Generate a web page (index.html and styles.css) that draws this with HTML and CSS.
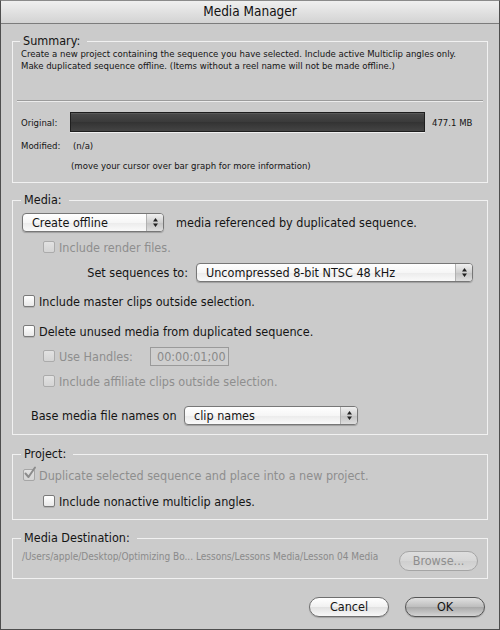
FILE: index.html
```html
<!DOCTYPE html>
<html>
<head>
<meta charset="utf-8">
<link rel="stylesheet" href="styles.css">
</head>
<body>
<div class="window">
  <div class="titlebar">Media Manager</div>
  <div class="content">
    <fieldset class="group summary">
      <legend>Summary:</legend>
      <p class="desc">Create a new project containing the sequence you have selected. Include active Multiclip angles only.<br>Make duplicated sequence offline. (Items without a reel name will not be made offline.)</p>
      <div class="sep"></div>
      <div class="stat-row original">
        <span class="stat-label">Original:</span>
        <div class="bar"></div>
        <span class="bar-value">477.1 MB</span>
      </div>
      <div class="stat-row modified">
        <span class="stat-label">Modified:</span>
        <span class="stat-value">(n/a)</span>
      </div>
      <p class="hint">(move your cursor over bar graph for more information)</p>
    </fieldset>

    <fieldset class="group media">
      <legend>Media:</legend>
      <div class="row r1">
        <div class="popup popup-offline">
          <span class="popup-label">Create offline</span>
          <span class="popup-arrows"><svg width="5" height="9" viewBox="0 0 5 9"><path d="M2.5 0 L5 3.5 H0 Z M0 5.5 H5 L2.5 9 Z" fill="#222"/></svg></span>
        </div>
        <span class="after-popup">media referenced by duplicated sequence.</span>
      </div>
      <div class="row r2 indent">
        <span class="check disabled"></span><span class="label disabled-text">Include render files.</span>
      </div>
      <div class="row r3">
        <span class="seq-label">Set sequences to:</span>
        <div class="popup popup-seq">
          <span class="popup-label">Uncompressed 8-bit NTSC 48 kHz</span>
          <span class="popup-arrows"><svg width="5" height="9" viewBox="0 0 5 9"><path d="M2.5 0 L5 3.5 H0 Z M0 5.5 H5 L2.5 9 Z" fill="#222"/></svg></span>
        </div>
      </div>
      <div class="row r4">
        <span class="check"></span><span class="label">Include master clips outside selection.</span>
      </div>
      <div class="row r5">
        <span class="check"></span><span class="label">Delete unused media from duplicated sequence.</span>
      </div>
      <div class="row r6 indent">
        <span class="check disabled"></span><span class="label disabled-text handles-label">Use Handles:</span>
        <span class="textfield">00:00:01;00</span>
      </div>
      <div class="row r7 indent">
        <span class="check disabled"></span><span class="label disabled-text">Include affiliate clips outside selection.</span>
      </div>
      <div class="row r8">
        <span class="base-label">Base media file names on</span>
        <div class="popup popup-base">
          <span class="popup-label">clip names</span>
          <span class="popup-arrows"><svg width="5" height="9" viewBox="0 0 5 9"><path d="M2.5 0 L5 3.5 H0 Z M0 5.5 H5 L2.5 9 Z" fill="#222"/></svg></span>
        </div>
      </div>
    </fieldset>

    <fieldset class="group project">
      <legend>Project:</legend>
      <div class="row p1">
        <span class="check disabled checked"><svg class="checkmark" width="14" height="14" viewBox="0 0 14 14"><path d="M2.5 7.5 L5.5 11 L12 1.5" stroke="#8c8c8c" stroke-width="2" fill="none" stroke-linecap="round" stroke-linejoin="round"/></svg></span><span class="label disabled-text">Duplicate selected sequence and place into a new project.</span>
      </div>
      <div class="row p2 indent">
        <span class="check"></span><span class="label">Include nonactive multiclip angles.</span>
      </div>
    </fieldset>

    <fieldset class="group destination">
      <legend>Media Destination:</legend>
      <div class="dest-row">
        <span class="path">/Users/apple/Desktop/Optimizing Bo... Lessons/Lessons Media/Lesson 04 Media</span>
        <span class="btn btn-disabled">Browse...</span>
      </div>
    </fieldset>

    <div class="buttons">
      <span class="btn">Cancel</span>
      <span class="btn btn-default">OK</span>
    </div>
  </div>
</div>
</body>
</html>
```

FILE: styles.css
```css
* { box-sizing: border-box; }
html, body { margin: 0; padding: 0; }
body {
  width: 500px;
  height: 630px;
  font-family: "DejaVu Sans Condensed", "DejaVu Sans", sans-serif;
  font-size: 12.5px;
  color: #141414;
  background: #cbcbcb;
}
.window {
  width: 500px;
  height: 630px;
  border: 1px solid #4e4e4e;
  border-top-color: #8a8a8a;
  background: #cbcbcb;
  display: flex;
  flex-direction: column;
  overflow: hidden;
}
.titlebar {
  flex: none;
  height: 23px;
  border-bottom: 1px solid #7c7c7c;
  background: linear-gradient(#efefef, #d3d3d3);
  text-align: center;
  font-size: 13.5px;
  line-height: 21px;
  color: #111;
}
.content {
  display: flex;
  flex-direction: column;
  padding: 11px 11px 0 11px;
}
.group {
  margin: 0;
  padding: 0 8px 0 8px;
  border: 1px solid #f1f1f1;
  min-width: 0;
}
legend {
  padding: 0 7px 0 3px;
  margin-left: -1px;
  line-height: 12px;
  font-size: 12.5px;
}
p { margin: 0; }

/* Summary */
.desc {
  font-size: 9.5px;
  line-height: 12px;
  margin-top: 1px;
}
.sep {
  margin: 28px -4px 0 -4px;
  height: 2px;
  border-top: 1px solid #9c9c9c;
  border-bottom: 1px solid #ececec;
}
.stat-row {
  display: flex;
  align-items: center;
  font-size: 9.5px;
}
.original { margin-top: 10px; height: 20px; }
.modified { margin-top: 7px; height: 12px; }
.stat-label { width: 49px; flex: none; }
.stat-value { margin-left: 3px; }
.bar {
  width: 355px;
  height: 20px;
  flex: none;
  border: 1px solid #1e1e1e;
  background: linear-gradient(#4a4a4a, #3a3a3a 50%, #333 51%, #444);
  box-shadow: 0 1px 0 #efefef, inset 0 1px 0 #5a5a5a;
}
.bar-value { margin-left: 7px; }
.hint {
  font-size: 9.5px;
  line-height: 12px;
  margin: 9px 0 0 50px;
}
.summary { padding-bottom: 10px; }

/* Media */
.media {
  margin-top: 11px;
  padding-left: 9px;
  padding-bottom: 9px;
}
.row {
  display: flex;
  align-items: center;
  height: 20px;
}
.indent { padding-left: 21px; }
.r4, .r5, .p1 { padding-left: 1px; }
.r1 { margin-top: 6px; }
.r2 { margin-top: 5px; }
.r3 { margin-top: 5px; }
.r4 { margin-top: 9px; }
.r5 { margin-top: 10px; }
.r6 { margin-top: 5px; }
.r7 { margin-top: 5px; }
.r8 { margin-top: 14px; }

.popup {
  display: flex;
  height: 19px;
  border: 1px solid #777;
  border-radius: 4px;
  background: linear-gradient(#ffffff, #f6f6f6 50%, #ebebeb 51%, #fafafa);
  box-shadow: 0 1px 1px rgba(0,0,0,0.22);
  flex: none;
}
.popup-label {
  flex: 1;
  padding-left: 9px;
  line-height: 17px;
  white-space: nowrap;
}
.popup-arrows {
  width: 17px;
  flex: none;
  border-left: 1px solid #b1b1b1;
  border-radius: 0 3px 3px 0;
  background: linear-gradient(#f0f0f0, #d0d0d0 50%, #c2c2c2 51%, #dedede);
  display: flex;
  align-items: center;
  justify-content: center;
}
.popup-offline { width: 142px; }
.popup-seq { width: 277px; margin-left: 8px; }
.popup-base { width: 174px; }
.after-popup { margin-left: 12px; }
.seq-label { width: 166px; text-align: right; flex: none; }
.base-label { width: 162px; padding-left: 9px; flex: none; }

.check {
  position: relative;
  width: 12px;
  height: 12px;
  flex: none;
  border: 1px solid #7a7a7a;
  border-radius: 2px;
  background: linear-gradient(#ffffff, #e9e9e9);
  box-shadow: 0 1px 0 rgba(0,0,0,0.12);
}
.check.disabled {
  border-color: #ababab;
  background: linear-gradient(#e2e2e2, #d4d4d4);
  box-shadow: none;
}
.check.checked { border-color: #a6a6a6; }
.checkmark {
  position: absolute;
  left: -1px;
  top: -4px;
}
.label { margin-left: 4px; white-space: nowrap; }
.disabled-text { color: #8e8e8e; }
.handles-label { width: 91px; flex: none; }
.textfield {
  width: 79px;
  height: 19px;
  border: 1px solid #9a9a9a;
  background: #cfcfcf;
  color: #8a8a8a;
  line-height: 17px;
  padding-left: 6px;
  white-space: nowrap;
}

/* Project */
.project {
  margin-top: 13px;
  padding-left: 9px;
  padding-bottom: 8px;
}
.p1 { margin-top: 5px; }
.p2 { margin-top: 6px; }

/* Destination */
.destination {
  margin-top: 12px;
  padding-left: 9px;
  padding-right: 9px;
  padding-bottom: 7px;
}
.dest-row {
  display: flex;
  justify-content: space-between;
  align-items: flex-start;
  margin-top: 7px;
  height: 20px;
}
.path {
  font-size: 10px;
  line-height: 11px;
  color: #8a8a8a;
  white-space: nowrap;
}

.btn {
  display: block;
  width: 80px;
  height: 20px;
  border: 1px solid #6f6f6f;
  border-radius: 10px;
  background: linear-gradient(#ffffff, #f1f1f1 50%, #e1e1e1 51%, #f7f7f7);
  box-shadow: 0 1px 1px rgba(0,0,0,0.2);
  text-align: center;
  line-height: 18px;
  flex: none;
}
.btn-disabled {
  width: 79px;
  border-color: #a5a5a5;
  color: #8e8e8e;
  background: linear-gradient(#dedede, #d6d6d6 50%, #cfcfcf 51%, #d9d9d9);
  box-shadow: none;
}
.btn-default {
  border-color: #555;
  background: linear-gradient(#e0e0e0, #bdbdbd 50%, #a9a9a9 51%, #d4d4d4);
}
.buttons {
  display: flex;
  justify-content: flex-end;
  gap: 16px;
  margin-top: 18px;
  padding-right: 3px;
}
```
